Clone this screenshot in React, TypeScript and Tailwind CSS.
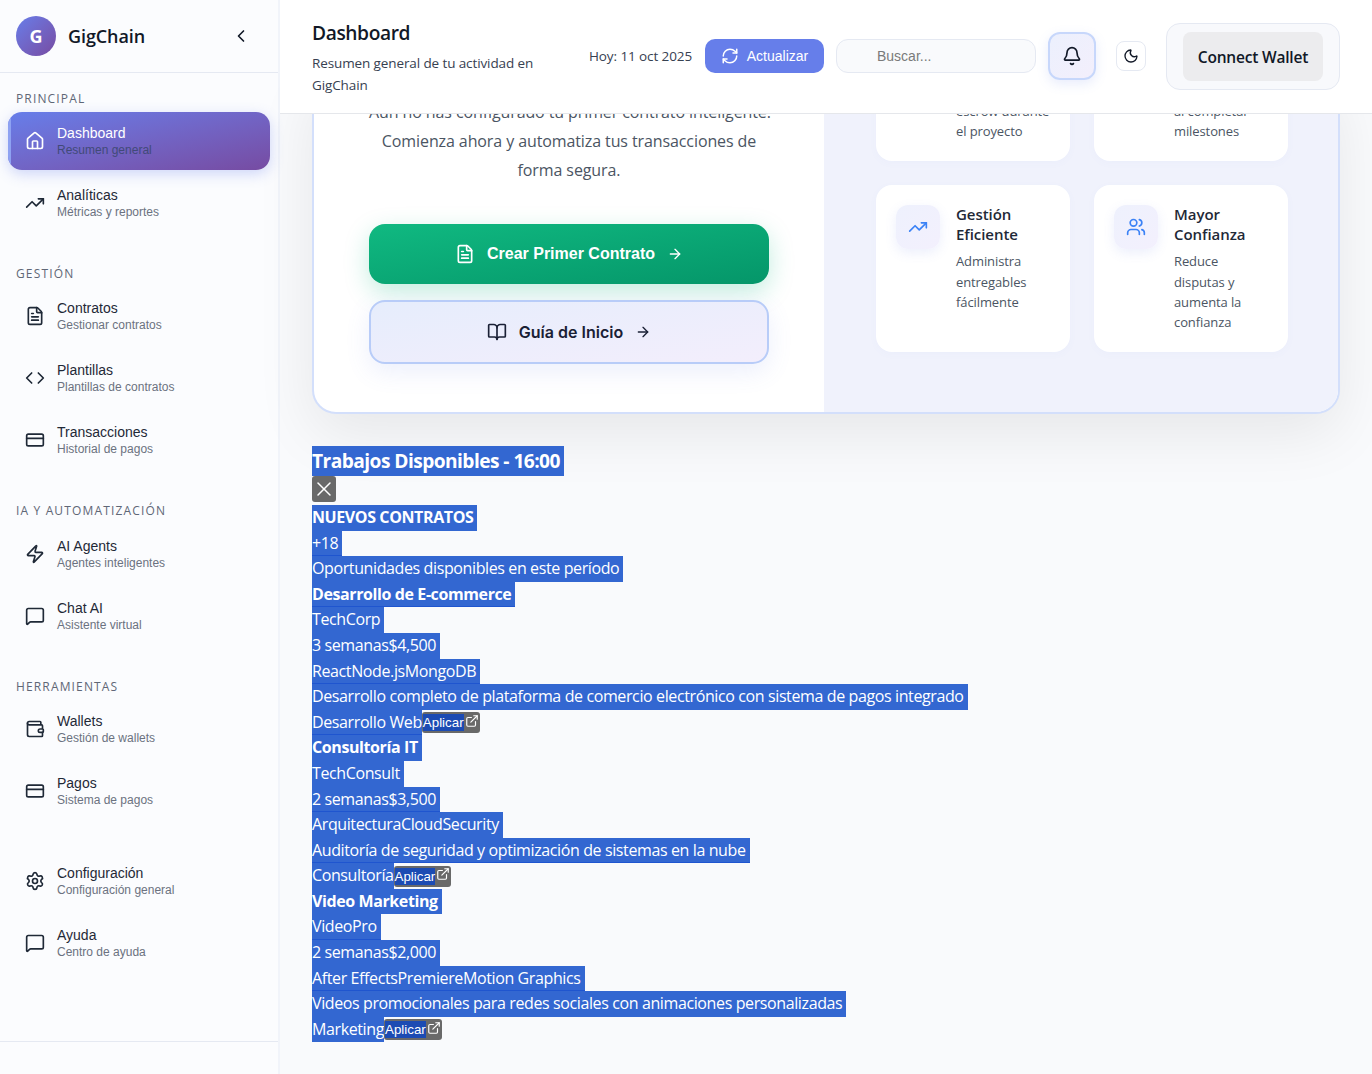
import React from "react";
import {
  House, TrendingUp, FileText, Code, CreditCard, Zap, MessageSquare, Wallet, Settings,
  ChevronLeft, RefreshCw, Bell, Moon, BookOpen, ArrowRight, X, ExternalLink, Users, Shield, CircleCheck,
} from "lucide-react";

const SANS = "font-['Liberation_Sans',Arial,sans-serif]";
const UI = "font-['Open_Sans','Noto_Sans',sans-serif]";

type Item = { icon: React.ElementType; title: string; sub: string; active?: boolean };

function NavItem({ icon: Icon, title, sub, active }: Item) {
  return (
    <div
      className={
        "relative flex items-center gap-3 h-[58px] mb-1 pl-[17px] rounded-[14px] overflow-hidden " +
        (active
          ? "bg-gradient-to-br from-[#667eea] to-[#764ba2] shadow-[0_4px_14px_rgba(102,126,234,0.3)]"
          : "")
      }
    >
      {active && <span className="absolute left-0 top-0 bottom-0 w-[3px] bg-[#8ea2f2]" />}
      <Icon size={20} strokeWidth={2} className={active ? "text-white" : "text-[#1f2937]"} />
      <div className={SANS + " pt-[1.5px]"}>
        <div className={"text-[14px] leading-[17px] " + (active ? "text-white" : "text-[#1f2937]")}>{title}</div>
        <div className={"text-[12px] leading-[17px] " + (active ? "text-[#414a78]" : "text-[#6b7280]")}>{sub}</div>
      </div>
    </div>
  );
}

function Section({ label, items, first }: { label?: string; items: Item[]; first?: boolean }) {
  return (
    <div className={first ? "" : "mt-[32px]"}>
      {label && (
        <div
          className={
            UI + " h-[23.4px] pt-[1px] pb-[5px] pl-2 leading-[17.4px] text-[12px] font-medium tracking-[1.15px] text-[#5f6776] uppercase"
          }
        >
          {label}
        </div>
      )}
      {items.map((i) => (
        <NavItem key={i.title} {...i} />
      ))}
    </div>
  );
}

function Sidebar() {
  return (
    <aside className="w-[280px] shrink-0 h-full bg-[#fbfcfe] border-r-2 border-[#f1f4fa] flex flex-col">
      <div className="h-[73px] shrink-0 border-b border-[#e5e9f2] flex items-center pl-4 pr-[27px]">
        <div className={UI + " w-10 h-10 rounded-full bg-gradient-to-br from-[#667eea] to-[#764ba2] text-white font-bold text-[18px] flex items-center justify-center"}>
          G
        </div>
        <div className={UI + " ml-3 flex-1 text-[18px] font-semibold text-[#111827] tracking-[-0.1px]"}>GigChain</div>
        <ChevronLeft size={20} className="text-[#111827]" />
      </div>
      <nav className="flex-1 pt-[15.6px] px-2">
        <Section
          first
          label="Principal"
          items={[
            { icon: House, title: "Dashboard", sub: "Resumen general", active: true },
            { icon: TrendingUp, title: "Analíticas", sub: "Métricas y reportes" },
          ]}
        />
        <Section
          label="Gestión"
          items={[
            { icon: FileText, title: "Contratos", sub: "Gestionar contratos" },
            { icon: Code, title: "Plantillas", sub: "Plantillas de contratos" },
            { icon: CreditCard, title: "Transacciones", sub: "Historial de pagos" },
          ]}
        />
        <Section
          label="IA y Automatización"
          items={[
            { icon: Zap, title: "AI Agents", sub: "Agentes inteligentes" },
            { icon: MessageSquare, title: "Chat AI", sub: "Asistente virtual" },
          ]}
        />
        <Section
          label="Herramientas"
          items={[
            { icon: Wallet, title: "Wallets", sub: "Gestión de wallets" },
            { icon: CreditCard, title: "Pagos", sub: "Sistema de pagos" },
          ]}
        />
        <Section
          items={[
            { icon: Settings, title: "Configuración", sub: "Configuración general" },
            { icon: MessageSquare, title: "Ayuda", sub: "Centro de ayuda" },
          ]}
        />
      </nav>
      <div className="h-[33px] shrink-0 border-t border-[#e5e9f2]" />
    </aside>
  );
}

function Header() {
  return (
    <header className="relative z-10 h-[114px] shrink-0 bg-white border-b border-[#e5e7eb] flex items-center pl-8 pr-8 pb-[1px]">
      <div className={UI + " w-[262px] self-start pt-[19px]"}>
        <div className="text-[19.2px] leading-[28px] font-semibold text-[#111827] tracking-[-0.4px]">Dashboard</div>
        <div className="mt-[5px] w-[240px] text-[13.5px] leading-[22px] text-[#374151] tracking-[-0.11px]">
          Resumen general de tu actividad en GigChain
        </div>
      </div>
      <div className={UI + " ml-[15px] w-[104px] whitespace-nowrap text-[13.5px] text-[#374151] tracking-[-0.1px]"}>
        Hoy: 11 oct 2025
      </div>
      <button className={SANS + " ml-[12px] w-[119px] h-[34px] rounded-[10px] bg-[#667eea] text-white text-[14px] flex items-center justify-center gap-2"}>
        <RefreshCw size={18} />
        Actualizar
      </button>
      <div className={SANS + " ml-3 w-[200px] h-[34px] rounded-[12px] border border-[#e5e9f2] bg-[#f9fafc] text-[14px] text-[#7a7a7a] flex items-center pl-[40px]"}>
        Buscar...
      </div>
      <div className="ml-3 w-12 h-12 rounded-[12px] border-2 border-[#c7d7fb] bg-gradient-to-br from-[#ecf0fd] to-[#f3effc] shadow-[0_4px_12px_rgba(102,126,234,0.15)] flex items-center justify-center">
        <Bell size={20} className="text-[#111827]" />
      </div>
      <div className="ml-5 w-[30px] h-[30px] rounded-[8px] border border-[#e5e9f2] bg-white flex items-center justify-center">
        <Moon size={16} className="text-[#111827]" />
      </div>
      <div className="ml-5 w-[174px] h-[67px] mt-[1px] rounded-[14px] border border-[#e5e9f2] bg-[#f8f9fc] flex items-center justify-center">
        <div className={UI + " w-[140px] h-[49px] pt-[3px] rounded-[8px] bg-[#ececee] flex items-center justify-center text-[15.5px] font-semibold text-[#111827] tracking-[-0.2px]"}>
          Connect Wallet
        </div>
      </div>
    </header>
  );
}

function Feature({
  icon: Icon, title, desc,
}: { icon: React.ElementType; title: string[]; desc: string[] }) {
  return (
    <div className={UI + " h-[167px] rounded-[16px] bg-white p-5 flex gap-4 shadow-[0_2px_8px_rgba(102,126,234,0.03)]"}>
      <div className="w-11 h-11 shrink-0 rounded-[12px] bg-gradient-to-br from-[#eef1fd] to-[#f3f0fd] shadow-[0_4px_12px_rgba(102,126,234,0.12)] flex items-center justify-center">
        <Icon size={20} className="text-[#3b82f6]" />
      </div>
      <div className="min-w-0 whitespace-nowrap -mt-[1px]">
        <div className="text-[15px] leading-[20px] font-semibold text-[#1f2937] tracking-[-0.05px]">
          {title.map((t) => (<div key={t}>{t}</div>))}
        </div>
        <div className="mt-[7px] text-[13px] leading-[20.3px] text-[#4b5563] tracking-[-0.1px]">
          {desc.map((t) => (<div key={t}>{t}</div>))}
        </div>
      </div>
    </div>
  );
}

function Hero() {
  return (
    <section className="-mt-[41px] mx-8 rounded-[24px] border-2 border-[#d3dffb] bg-white overflow-hidden flex shadow-[0_20px_60px_rgba(0,0,0,0.08)]">
      <div className="w-[510px] shrink-0 pt-[23px] pb-[48px] px-[55px]">
        <p className={UI + " text-center whitespace-nowrap text-[16px] leading-[28.8px] text-[#4b5563] tracking-[-0.1px]"}>
          Aún no has configurado tu primer contrato inteligente.
          <br />
          Comienza ahora y automatiza tus transacciones de
          <br />
          forma segura.
        </p>
        <button className={SANS + " mt-[40px] w-[400px] h-[60px] rounded-[16px] bg-gradient-to-br from-[#10b981] to-[#059669] text-white font-bold text-[16px] flex items-center justify-center gap-3 shadow-[0_8px_24px_rgba(16,185,129,0.25)]"}>
          <FileText size={20} />
          Crear Primer Contrato
          <ArrowRight size={16} />
        </button>
        <button className="mt-4 w-[400px] h-[64px] pb-[1px] rounded-[16px] border-2 border-[#b8ccf8] bg-gradient-to-br from-[#e6edfc] to-[#f3eefc] text-[#1a2035] font-semibold text-[16px] font-['Inter',sans-serif] flex items-center justify-center gap-3 shadow-[0_8px_24px_rgba(102,126,234,0.12)]">
          <BookOpen size={20} />
          Guía de Inicio
          <ArrowRight size={16} />
        </button>
      </div>
      <div className="flex-1 bg-[#f0f2fc] pl-[52px] pb-[60px] flex flex-col justify-end">
        <div className="grid grid-cols-[194px_194px] gap-6 -mt-[200px]">
          <Feature icon={Shield} title={["Pagos", "Seguros"]} desc={["Tus fondos", "protegidos en", "escrow durante", "el proyecto"]} />
          <Feature icon={CircleCheck} title={["Pagos", "Automáticos"]} desc={["Libera los", "pagos", "al completar", "milestones"]} />
          <Feature icon={TrendingUp} title={["Gestión", "Eficiente"]} desc={["Administra", "entregables", "fácilmente"]} />
          <Feature icon={Users} title={["Mayor", "Confianza"]} desc={["Reduce", "disputas y", "aumenta la", "confianza"]} />
        </div>
      </div>
    </section>
  );
}

const ROW = "block w-fit h-[25.6px] leading-[25.6px] pr-1 bg-[#3367d1] text-white whitespace-nowrap";
const EDGE = " shadow-[inset_0_-1px_0_#1f55cf]";

function Row({ children, bold, edge }: { children: React.ReactNode; bold?: boolean; edge?: boolean }) {
  return (
    <div className={ROW + (bold ? " font-bold tracking-[-0.4px]" : " tracking-[-0.385px]") + (edge ? EDGE : "")}>
      {children}
    </div>
  );
}

function Aplicar() {
  return (
    <button className={SANS + " absolute left-full top-[2.6px] h-[21px] px-[1px] rounded-[3px] bg-[#696969] text-white text-[13.33px] leading-[17px] flex items-center"}>
      <span className="bg-[#1c4bb3] h-[17px] tracking-normal">Aplicar</span>
      <ExternalLink size={14} className="ml-[1px] -mt-1" />
    </button>
  );
}

function ApplyRow({ label, edge }: { label: string; edge?: boolean }) {
  return (
    <div className="relative w-fit h-[25.6px]">
      <div className={"h-[25.6px] leading-[25.6px] bg-[#3367d1] text-white whitespace-nowrap tracking-[-0.385px]" + (edge ? EDGE : "")}>{label}</div>
      <Aplicar />
    </div>
  );
}

function Jobs() {
  return (
    <section className={UI + " mt-8 ml-8 text-[16px]"}>
      <div className="w-fit h-[30px] leading-[30px] pr-1 bg-[#3367d1] text-white text-[19.2px] font-bold tracking-[-0.57px] whitespace-nowrap">
        Trabajos Disponibles - 16:00
      </div>
      <button className="w-6 h-[26px] rounded-[3px] bg-[#696969] text-white flex items-center justify-center">
        <X size={24} strokeWidth={1.5} />
      </button>
      <div className="mt-[2.6px]">
        <Row bold>NUEVOS CONTRATOS</Row>
        <Row edge>+18</Row>
        <Row>Oportunidades disponibles en este período</Row>
        <Row bold edge>Desarrollo de E-commerce</Row>
        <Row>TechCorp</Row>
        <Row>3 semanas$4,500</Row>
        <Row edge>ReactNode.jsMongoDB</Row>
        <Row>Desarrollo completo de plataforma de comercio electrónico con sistema de pagos integrado</Row>
        <ApplyRow label="Desarrollo Web" edge />
        <Row bold>Consultoría IT</Row>
        <Row>TechConsult</Row>
        <Row edge>2 semanas$3,500</Row>
        <Row>ArquitecturaCloudSecurity</Row>
        <Row edge>Auditoría de seguridad y optimización de sistemas en la nube</Row>
        <ApplyRow label="Consultoría" />
        <Row bold>Video Marketing</Row>
        <Row edge>VideoPro</Row>
        <Row>2 semanas$2,000</Row>
        <Row edge>After EffectsPremiereMotion Graphics</Row>
        <Row>Videos promocionales para redes sociales con animaciones personalizadas</Row>
        <ApplyRow label="Marketing" />
      </div>
    </section>
  );
}

export default function App() {
  return (
    <div className="w-[1372px] h-[1074px] flex overflow-hidden bg-[#f9fafc]">
      <Sidebar />
      <div className="flex-1 min-w-0 flex flex-col">
        <Header />
        <main className="flex-1 min-h-0">
          <Hero />
          <Jobs />
        </main>
      </div>
    </div>
  );
}
